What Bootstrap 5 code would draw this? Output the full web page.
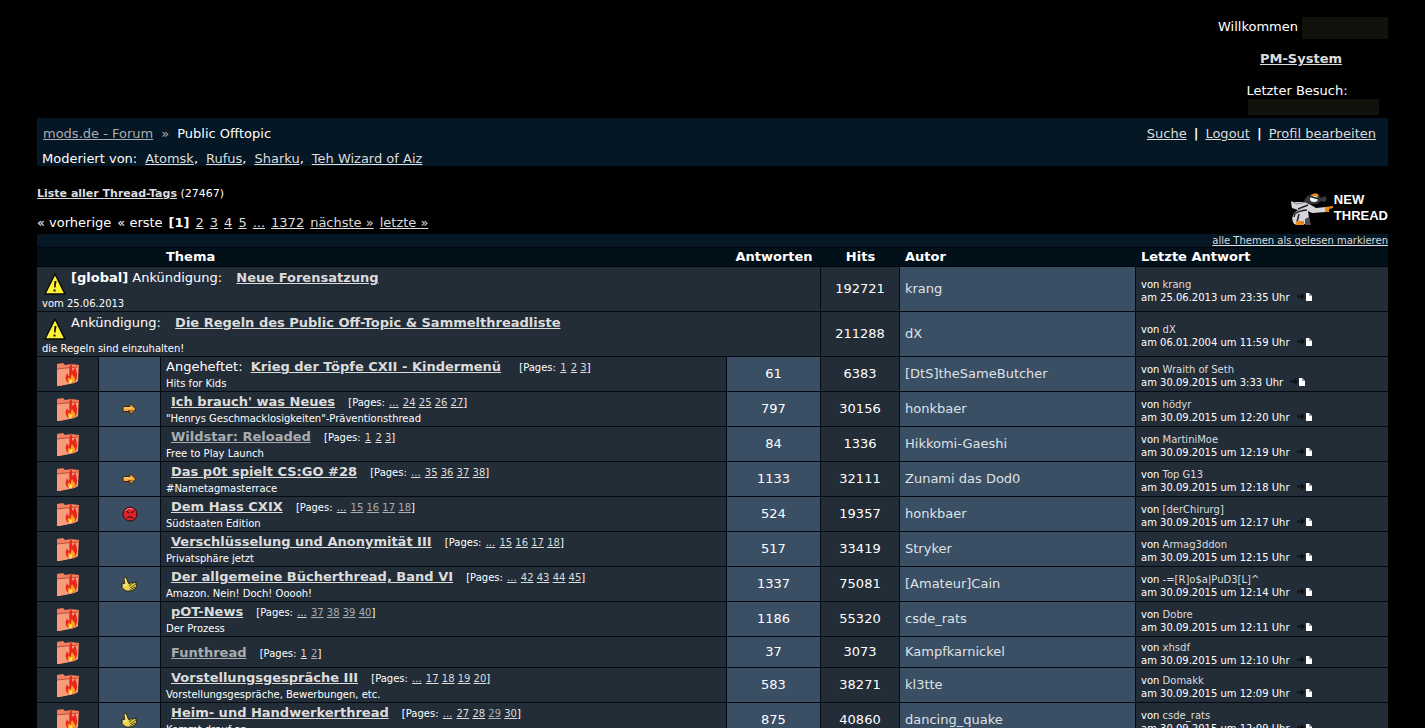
<!DOCTYPE html>
<html lang="de">
<head>
<meta charset="utf-8">
<meta name="viewport" content="width=device-width, initial-scale=1">
<title>Public Offtopic - mods.de Forum</title>
<link rel="stylesheet" href="https://cdn.jsdelivr.net/npm/bootstrap@5.3.0/dist/css/bootstrap.min.css">
<style>
body{background:#000;color:#fff;font:13px/16px Verdana,"DejaVu Sans",sans-serif}
a{color:#dcdcdc}
a:hover{color:#fff}
.page{padding:0 37px}
.welcome{width:174px;height:118px;padding:17px 0 3px}
.welcome-name{line-height:20px}
.welcome-user{flex:1;height:22px;background:#10120b}
.welcome-date{width:131px;height:17px;background:#10120b}
.pm{margin:12px 0 16px}
.crumbs{background:#051624;padding:3px 12px 0 5px;height:48px}
.crumb-line{line-height:25px}
.crumb-line .path{padding-left:1px;gap:8px}
.mods{gap:8px}
.user-links{gap:7px}
.seen{color:#a9adb1}
.tiny{font-size:10px;line-height:15px}
.tags{font-size:11px;line-height:14px;margin-top:21px}
.pager{gap:6px;margin:14px 0 3px}
.newthread{font:700 13px/16px "Liberation Sans",Arial,sans-serif;color:#fff}
.newthread:hover{color:#fff}
.mark-all{background:#051624;height:13px;font-size:10px;line-height:13px}
.threads{width:100%;table-layout:fixed;border-collapse:separate;border-spacing:0;border-top:1px solid #00060b}
.threads th{background:#021019;height:18px;line-height:18px;padding:0 5px;border-bottom:1px solid #00060b}
.threads td{background:#232d38;padding:0 5px;border-bottom:1px solid #030a11;border-right:1px solid #030a11;height:35px}
.threads td:last-child{border-right:0}
.threads .short td{height:31px}
.threads .announce td{height:45px}
.threads td.lit{background:#3a4e64}
.threads td.author{color:#dfe2e5}
.col-folder{width:62px}.col-icon{width:62px}.col-num{width:94px}.col-hits{width:79px}.col-author{width:236px}.col-last{width:252px}
.notice-line{padding-left:2px;gap:5px}
.title{line-height:19px}
.title a.topic{font-weight:700;margin:0 9px 0 5px}
.title a.sticky{margin:0 14px 0 4px}
.title a.notice{margin-left:10px}
.pages{font-size:10px;line-height:1}
.pages a:first-child{margin:0 1px}
.last{font-size:10px;line-height:13px;padding-top:3px}
.last span{color:#dcdcdc}
svg{display:block}
.last svg{display:inline-block;vertical-align:0;margin-left:4px}
.folder{margin:0 auto}
</style>
</head>
<body>
<svg width="0" height="0" class="position-absolute" aria-hidden="true">
<symbol id="folder" viewBox="0 0 24 24"><path d="M1 2 7 1l2 2 6-1 8 1-1 16-4 2-15 3H1Z" fill="#f0805f"/><path d="M1 7 10 6 22 5v14l-4 2-15 3H1Z" fill="#f99c7c"/><path d="M1 7 10 6 22 5" stroke="#b94f3c" fill="none"/><path d="M15 1c2 4 0 6 2 8 1-2 2-3 2-4 2 5 3 9 1 13-2 4-9 4-10 0-1-3 0-4 1-7 1 2 1 3 2 3 1-4-1-7 2-13Z" fill="#e9281c"/><path d="M16 12c2 4 3 3 3 6s-6 4-7 1c-1-2 1-3 1-4 1 1 1 2 2 2 0-2 0-3 1-5Z" fill="#ffa61e"/><path d="M15 17c2 3 1 4-1 4s-1-2 1-4Z" fill="#ffe76a"/></symbol>
<symbol id="warn" viewBox="0 0 22 24"><path d="M11 2 21 22H1Z" fill="#fdf13a" stroke="#0b0b06" stroke-width="1.500" stroke-linejoin="round"/><path d="m12.500 9-1 6.500h-1.500l.5-6.500Z" fill="#111"/><rect x="9.500" y="17.500" width="2" height="2" fill="#111"/></symbol>
<symbol id="arrow" viewBox="0 0 15 14"><path d="M1 4.500h7V1.500L14 7l-6 5.500v-3H1Z" fill="#f5a83c" stroke="#3c2912"/><path d="M2 6h8" stroke="#ffe08e"/><path d="M6 8.500h5" stroke="#a75d13"/></symbol>
<symbol id="angry" viewBox="0 0 16 16"><circle cx="8" cy="8" r="7" fill="#d8232d" stroke="#300c13"/><path d="M3 5q3-4 8-2" stroke="#ff8c8a" fill="none"/><path d="m4 5 3 2m5-2L9 7M5 12q3-3 6 0" stroke="#22080c" fill="none"/></symbol>
<symbol id="thumb" viewBox="0 0 17 16"><path d="M1 8 4 7 3 2l2-1 2 5 1 2 3-2 1 1 3-1v2l1 1-1 2-1 2-4 2H5L1 12Z" fill="#e8d552" stroke="#2c2a14"/><path d="m8 10 4-3M9 12l6-4M9 14l5-3" stroke="#4a421c"/><path d="M3 9h3M4 3l1 4" stroke="#fff3a0"/></symbol>
<symbol id="goto" viewBox="0 0 15 9"><path d="M0 3.500h4V1l4 3.500L4 8V5.500H0Z" fill="#0c1219"/><path d="M9 1h3l3 3v5H9Z" fill="#fff"/><path d="M12 1v3h3" fill="#9aa1a8"/></symbol>
</svg>
<div class="page container-fluid">
<header class="d-flex justify-content-end">
<div class="welcome d-flex flex-column align-items-center">
<div class="welcome-name d-flex w-100 ps-1"><span>Willkommen&nbsp;</span><span class="welcome-user"></span></div>
<div class="pm"><a href="#" class="fw-bold">PM-System</a></div>
<div class="pe-2">Letzter Besuch:</div><div class="welcome-date ms-4"></div>
</div>
</header>
<nav class="crumbs">
<div class="crumb-line d-flex justify-content-between"><div class="path d-flex"><a href="#" class="seen">mods.de - Forum</a><span class="seen">»</span><span>Public Offtopic</span></div>
<div class="user-links d-flex"><a href="#">Suche</a><b>|</b><a href="#">Logout</a><b>|</b><a href="#">Profil bearbeiten</a></div></div>
<div class="crumb-line mods d-flex"><span>Moderiert von:</span><span><a href="#">Atomsk</a>,</span><span><a href="#">Rufus</a>,</span><span><a href="#">Sharku</a>,</span><a href="#">Teh Wizard of Aiz</a></div>
</nav>
<div class="d-flex justify-content-between align-items-end">
<div>
<div class="tags"><a href="#" class="fw-bold">Liste aller Thread-Tags</a> (27467)</div>
<div class="pager d-flex"><span>« vorherige</span><span>« erste</span><b>[1]</b><a href="#">2</a><a href="#">3</a><a href="#">4</a><a href="#">5</a><a href="#">...</a><a href="#">1372</a><a href="#">nächste »</a><a href="#">letzte »</a></div>
</div>
<a href="#" class="newthread d-flex text-decoration-none mb-2"><svg width="44" height="34" viewBox="0 0 44 34"><path d="M1 10 15 10l6 3 5 3 10-1v5l-14 1-4-2 2 13H4q-5-8 4-14l-6-2Z" fill="#d6d6da"/><path d="M8 17 18 13M4 25q0-6 13-7M9 22l-2 8" stroke="#25252b" fill="none" stroke-width="1.500"/><path d="m1 9 6 3 9-2" stroke="#777" fill="none"/><path d="M14 9q2-6 9-7 6 0 8 4l4-2 2 3-2 3-4-1q-4 4-10 3-4 0-7-3Z" fill="#38383d"/><path d="M20 4q5-5 9-1l-2 2Z" fill="#e78b15"/><ellipse cx="24" cy="7" rx="4" ry="3" fill="#f5f5f5"/><path d="M19 4 29 7" stroke="#222" stroke-width="1.500"/><path d="m35 15 8-1v2l-4 1v3h-4Z" fill="#e78b15"/><path d="M7 29h7v4H5Z" fill="#e78b15"/><path d="m15 27 4-2 2 8h-6Z" fill="#4b4b50"/></svg><span>NEW<br>THREAD</span></a>
</div>
<div class="mark-all text-end"><a href="#">alle Themen als gelesen markieren</a></div>
<table class="threads">
<colgroup><col class="col-folder"><col class="col-icon"><col><col class="col-num"><col class="col-hits"><col class="col-author"><col class="col-last"></colgroup>
<thead><tr><th></th><th></th><th>Thema</th><th class="text-center">Antworten</th><th class="text-center">Hits</th><th>Autor</th><th>Letzte Antwort</th></tr></thead>
<tbody>
<tr class="announce"><td colspan="4"><div class="notice-line d-flex"><svg width="22" height="24" class="mt-1"><use href="#warn"/></svg><div class="title"><b>[global]</b> Ankündigung: <a href="#" class="topic notice">Neue Forensatzung</a></div></div><div class="tiny">vom 25.06.2013</div></td><td class="text-center">192721</td><td class="lit author">krang</td><td><div class="last">von <span>krang</span><br>am 25.06.2013 um 23:35 Uhr <svg width="15" height="9"><use href="#goto"/></svg></div></td></tr>
<tr class="announce"><td colspan="4"><div class="notice-line d-flex"><svg width="22" height="24" class="mt-1"><use href="#warn"/></svg><div class="title">Ankündigung: <a href="#" class="topic notice">Die Regeln des Public Off-Topic &amp; Sammelthreadliste</a></div></div><div class="tiny">die Regeln sind einzuhalten!</div></td><td class="text-center">211288</td><td class="lit author">dX</td><td><div class="last">von <span>dX</span><br>am 06.01.2004 um 11:59 Uhr <svg width="15" height="9"><use href="#goto"/></svg></div></td></tr>
<tr><td><svg class="folder" width="24" height="24"><use href="#folder"/></svg></td><td class="lit"></td><td><div class="title">Angeheftet: <a href="#" class="topic sticky">Krieg der Töpfe CXII - Kindermenü</a> <span class="pages">[Pages: <a href="#">1</a> <a href="#">2</a> <a href="#">3</a>]</span></div><div class="tiny">Hits for Kids</div></td><td class="lit text-center">61</td><td class="text-center">6383</td><td class="lit author">[DtS]theSameButcher</td><td><div class="last">von <span>Wraith of Seth</span><br>am 30.09.2015 um 3:33 Uhr <svg width="15" height="9"><use href="#goto"/></svg></div></td></tr>
<tr><td><svg class="folder" width="24" height="24"><use href="#folder"/></svg></td><td class="lit"><svg class="mx-auto" width="15" height="14"><use href="#arrow"/></svg></td><td><div class="title"><a href="#" class="topic">Ich brauch' was Neues</a> <span class="pages">[Pages: <a href="#">...</a> <a href="#">24</a> <a href="#">25</a> <a href="#">26</a> <a href="#">27</a>]</span></div><div class="tiny">"Henrys Geschmacklosigkeiten"-Präventionsthread</div></td><td class="lit text-center">797</td><td class="text-center">30156</td><td class="lit author">honkbaer</td><td><div class="last">von <span>hödyr</span><br>am 30.09.2015 um 12:20 Uhr <svg width="15" height="9"><use href="#goto"/></svg></div></td></tr>
<tr><td><svg class="folder" width="24" height="24"><use href="#folder"/></svg></td><td class="lit"></td><td><div class="title"><a href="#" class="topic seen">Wildstar: Reloaded</a> <span class="pages">[Pages: <a href="#">1</a> <a href="#">2</a> <a href="#">3</a>]</span></div><div class="tiny">Free to Play Launch</div></td><td class="lit text-center">84</td><td class="text-center">1336</td><td class="lit author">Hikkomi-Gaeshi</td><td><div class="last">von <span>MartiniMoe</span><br>am 30.09.2015 um 12:19 Uhr <svg width="15" height="9"><use href="#goto"/></svg></div></td></tr>
<tr><td><svg class="folder" width="24" height="24"><use href="#folder"/></svg></td><td class="lit"><svg class="mx-auto" width="15" height="14"><use href="#arrow"/></svg></td><td><div class="title"><a href="#" class="topic">Das p0t spielt CS:GO #28</a> <span class="pages">[Pages: <a href="#">...</a> <a href="#">35</a> <a href="#">36</a> <a href="#">37</a> <a href="#">38</a>]</span></div><div class="tiny">#Nametagmasterrace</div></td><td class="lit text-center">1133</td><td class="text-center">32111</td><td class="lit author">Zunami das Dod0</td><td><div class="last">von <span>Top G13</span><br>am 30.09.2015 um 12:18 Uhr <svg width="15" height="9"><use href="#goto"/></svg></div></td></tr>
<tr><td><svg class="folder" width="24" height="24"><use href="#folder"/></svg></td><td class="lit"><svg class="mx-auto" width="16" height="16"><use href="#angry"/></svg></td><td><div class="title"><a href="#" class="topic">Dem Hass CXIX</a> <span class="pages">[Pages: <a href="#">...</a> <a href="#" class="seen">15</a> <a href="#" class="seen">16</a> <a href="#" class="seen">17</a> <a href="#" class="seen">18</a>]</span></div><div class="tiny">Südstaaten Edition</div></td><td class="lit text-center">524</td><td class="text-center">19357</td><td class="lit author">honkbaer</td><td><div class="last">von <span>[derChirurg]</span><br>am 30.09.2015 um 12:17 Uhr <svg width="15" height="9"><use href="#goto"/></svg></div></td></tr>
<tr><td><svg class="folder" width="24" height="24"><use href="#folder"/></svg></td><td class="lit"></td><td><div class="title"><a href="#" class="topic">Verschlüsselung und Anonymität III</a> <span class="pages">[Pages: <a href="#">...</a> <a href="#">15</a> <a href="#">16</a> <a href="#">17</a> <a href="#">18</a>]</span></div><div class="tiny">Privatsphäre jetzt</div></td><td class="lit text-center">517</td><td class="text-center">33419</td><td class="lit author">Stryker</td><td><div class="last">von <span>Armag3ddon</span><br>am 30.09.2015 um 12:15 Uhr <svg width="15" height="9"><use href="#goto"/></svg></div></td></tr>
<tr><td><svg class="folder" width="24" height="24"><use href="#folder"/></svg></td><td class="lit"><svg class="mx-auto" width="17" height="16"><use href="#thumb"/></svg></td><td><div class="title"><a href="#" class="topic">Der allgemeine Bücherthread, Band VI</a> <span class="pages">[Pages: <a href="#">...</a> <a href="#">42</a> <a href="#">43</a> <a href="#">44</a> <a href="#">45</a>]</span></div><div class="tiny">Amazon. Nein! Doch! Ooooh!</div></td><td class="lit text-center">1337</td><td class="text-center">75081</td><td class="lit author">[Amateur]Cain</td><td><div class="last">von <span>-=[R]o$a|PuD3[L]^</span><br>am 30.09.2015 um 12:14 Uhr <svg width="15" height="9"><use href="#goto"/></svg></div></td></tr>
<tr><td><svg class="folder" width="24" height="24"><use href="#folder"/></svg></td><td class="lit"></td><td><div class="title"><a href="#" class="topic">pOT-News</a> <span class="pages">[Pages: <a href="#">...</a> <a href="#" class="seen">37</a> <a href="#" class="seen">38</a> <a href="#" class="seen">39</a> <a href="#" class="seen">40</a>]</span></div><div class="tiny">Der Prozess</div></td><td class="lit text-center">1186</td><td class="text-center">55320</td><td class="lit author">csde_rats</td><td><div class="last">von <span>Dobre</span><br>am 30.09.2015 um 12:11 Uhr <svg width="15" height="9"><use href="#goto"/></svg></div></td></tr>
<tr class="short"><td><svg class="folder" width="24" height="24"><use href="#folder"/></svg></td><td class="lit"></td><td><div class="title"><a href="#" class="topic seen">Funthread</a> <span class="pages">[Pages: <a href="#">1</a> <a href="#" class="seen">2</a>]</span></div></td><td class="lit text-center">37</td><td class="text-center">3073</td><td class="lit author">Kampfkarnickel</td><td><div class="last">von <span>xhsdf</span><br>am 30.09.2015 um 12:10 Uhr <svg width="15" height="9"><use href="#goto"/></svg></div></td></tr>
<tr><td><svg class="folder" width="24" height="24"><use href="#folder"/></svg></td><td class="lit"></td><td><div class="title"><a href="#" class="topic">Vorstellungsgespräche III</a> <span class="pages">[Pages: <a href="#">...</a> <a href="#">17</a> <a href="#">18</a> <a href="#">19</a> <a href="#">20</a>]</span></div><div class="tiny">Vorstellungsgespräche, Bewerbungen, etc.</div></td><td class="lit text-center">583</td><td class="text-center">38271</td><td class="lit author">kl3tte</td><td><div class="last">von <span>Domakk</span><br>am 30.09.2015 um 12:09 Uhr <svg width="15" height="9"><use href="#goto"/></svg></div></td></tr>
<tr><td><svg class="folder" width="24" height="24"><use href="#folder"/></svg></td><td class="lit"><svg class="mx-auto" width="17" height="16"><use href="#thumb"/></svg></td><td><div class="title"><a href="#" class="topic">Heim- und Handwerkerthread</a> <span class="pages">[Pages: <a href="#">...</a> <a href="#">27</a> <a href="#">28</a> <a href="#" class="seen">29</a> <a href="#">30</a>]</span></div><div class="tiny">Kommt drauf an</div></td><td class="lit text-center">875</td><td class="text-center">40860</td><td class="lit author">dancing_quake</td><td><div class="last">von <span>csde_rats</span><br>am 30.09.2015 um 12:09 Uhr <svg width="15" height="9"><use href="#goto"/></svg></div></td></tr>
</tbody>
</table>
</div>
<script src="https://cdn.jsdelivr.net/npm/bootstrap@5.3.0/dist/js/bootstrap.bundle.min.js"></script>
</body>
</html>
